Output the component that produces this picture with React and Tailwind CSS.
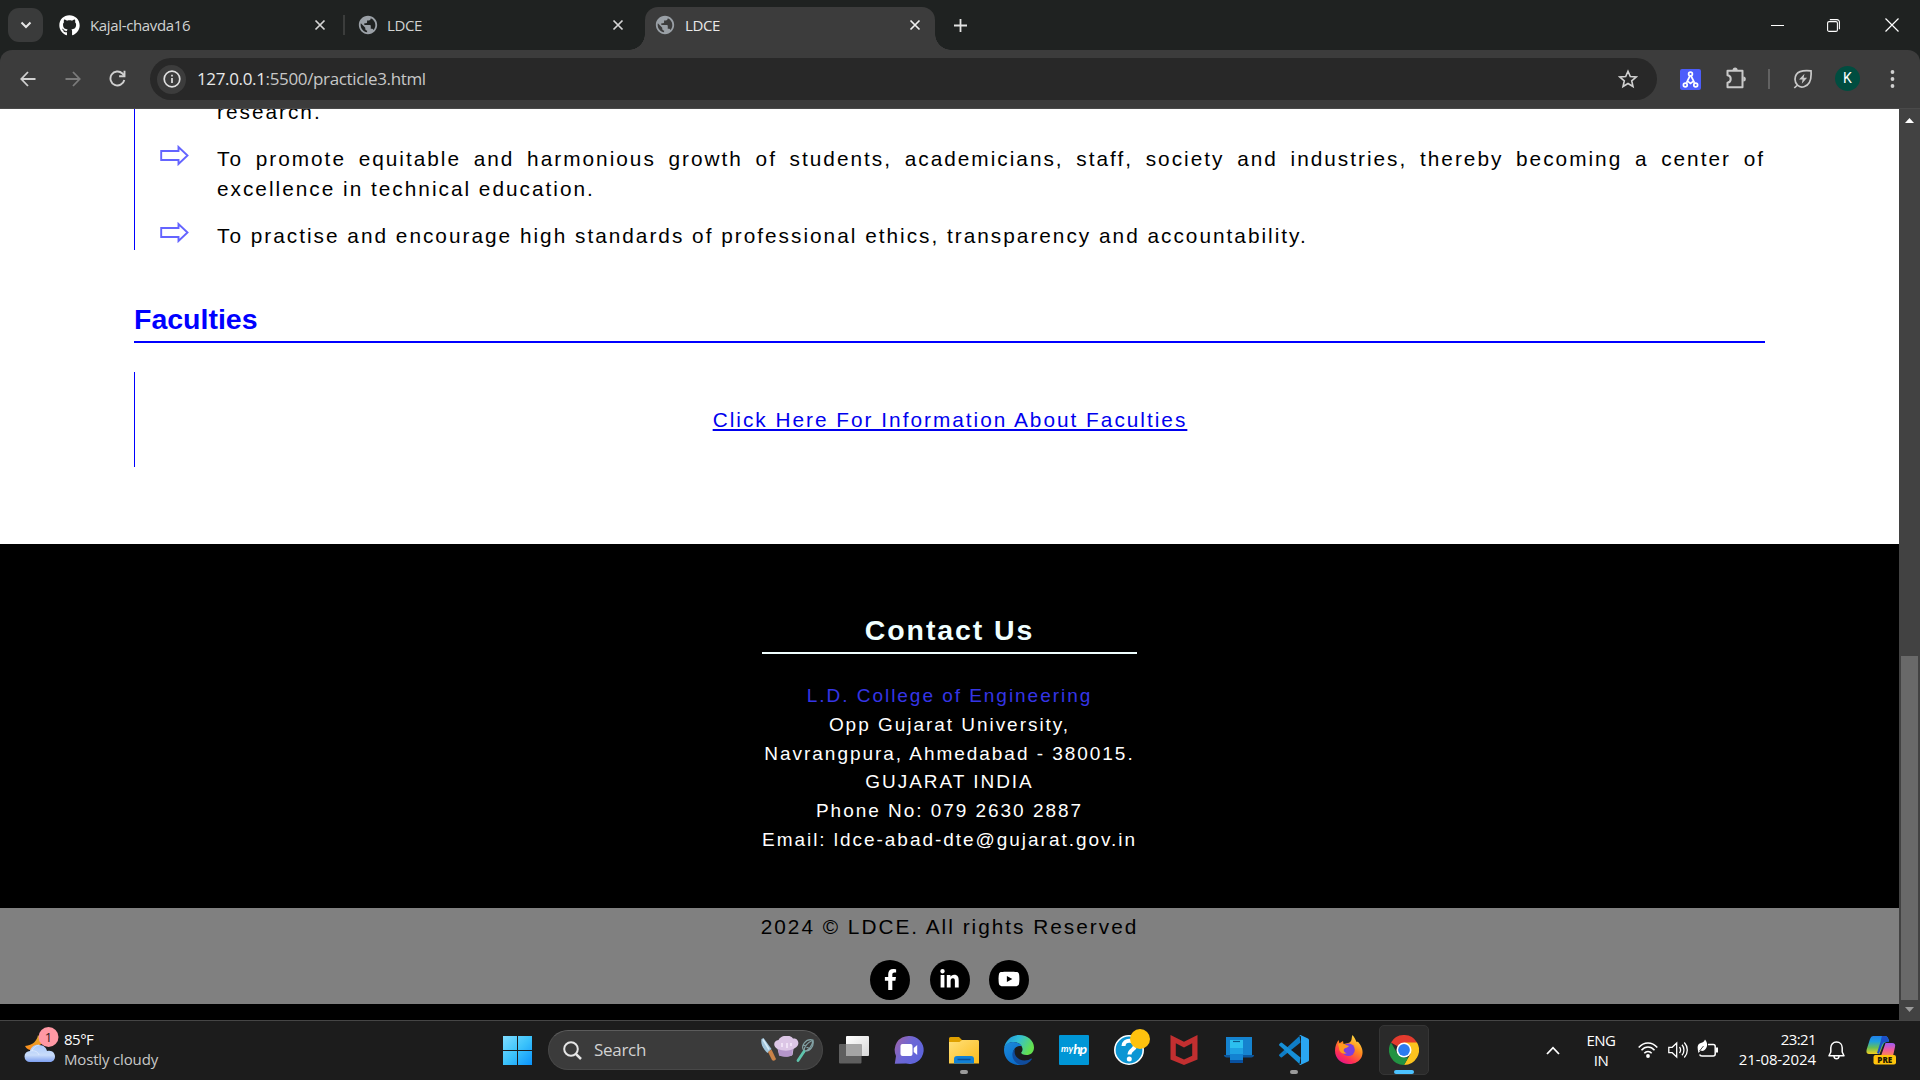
import { FaGithub, FaFacebookF, FaLinkedinIn, FaYoutube } from "react-icons/fa";
import { MdPublic } from "react-icons/md";

function CloseX({ color = "#d5d5d5" }) {
  return (
    <svg width="12" height="12" viewBox="0 0 12 12" stroke={color} strokeWidth="1.7">
      <path d="M1.5 1.5l9 9M10.5 1.5l-9 9" />
    </svg>
  );
}

function TabStrip() {
  return (
    <div className="flex h-[50px] shrink-0 bg-[#1f2221] text-[15px] tracking-[-0.35px] text-[#d0d2d1]">
      <div className="flex w-[645px] items-center">
        <div className="ml-2 flex h-[34px] w-[35px] items-center justify-center rounded-[11px] bg-[#3a3b3b]">
          <svg width="12" height="8" viewBox="0 0 12 8" fill="none" stroke="#e6e6e6" strokeWidth="2">
            <path d="M1.5 1.5L6 6l4.500-4.500" />
          </svg>
        </div>
        <FaGithub className="ml-4 text-white" size={21} />
        <span className="ml-[10px] w-[224px]">Kajal-chavda16</span>
        <CloseX />
        <div className="ml-[17px] h-5 w-[2px] bg-[#3b3d3c]" />
        <MdPublic className="ml-[12px] text-[#9aa0a6]" size={22} />
        <span className="ml-[8px] w-[225px]">LDCE</span>
        <CloseX />
      </div>
      <div className="relative mt-[7px] flex w-[290px] items-center rounded-t-[13px] bg-[#3c3c3c] pb-[7px]">
        <div className="absolute -left-4 bottom-0 size-4 bg-[radial-gradient(circle_at_0_0,#1f2221_15.5px,#3c3c3c_16px)]" />
        <div className="absolute -right-4 bottom-0 size-4 bg-[radial-gradient(circle_at_100%_0,#1f2221_15.5px,#3c3c3c_16px)]" />
        <MdPublic className="ml-[9px] text-[#9aa0a6]" size={22} />
        <span className="ml-[9px] mt-px w-[224px] text-[#e8e8e8]">LDCE</span>
        <CloseX color="#f0f0f0" />
      </div>
      <div className="flex flex-1 items-center text-[#e2e2e2]">
        <svg className="ml-[19px]" width="13" height="13" viewBox="0 0 13 13" stroke="currentColor" strokeWidth="1.8">
          <path d="M6.500 0v13M0 6.500h13" />
        </svg>
        <div className="flex-1" />
        <svg className="mr-[43px]" width="13" height="13" viewBox="0 0 13 13" stroke="#fff">
          <path d="M0 6.500h13" />
        </svg>
        <svg className="mr-[45px]" width="13" height="13" viewBox="0 0 13 13" fill="none" stroke="#fff" strokeWidth="1.100">
          <rect x="0.600" y="2.600" width="9.800" height="9.800" rx="1.500" />
          <path d="M2.800 .6h7.200a2.400 2.400 0 0 1 2.400 2.400v7.200" />
        </svg>
        <svg className="mr-[21px]" width="14" height="14" viewBox="0 0 14 14" stroke="#fff" strokeWidth="1.200">
          <path d="M.5.5l13 13M13.500.5l-13 13" />
        </svg>
      </div>
    </div>
  );
}

function Toolbar() {
  return (
    <div className="h-[59px] shrink-0 bg-[#1f2221]">
      <div className="flex h-full items-center rounded-t-[12px] border-b border-[#4a4a4a] bg-[#3c3c3c]">
        <svg className="ml-[20px] -mt-[1px]" width="16" height="16" viewBox="0 0 16 16" fill="none" stroke="#d0d0d0" strokeWidth="1.800">
          <path d="M15.500 8H1.500M8 1L1.300 8 8 15" />
        </svg>
        <svg className="ml-[29px] -mt-[1px]" width="16" height="16" viewBox="0 0 16 16" fill="none" stroke="#7b7b7b" strokeWidth="1.800">
          <path d="M.5 8h14M8 1l6.700 7L8 15" />
        </svg>
        <svg className="ml-[28px] -mt-[1px]" width="17" height="17" viewBox="0 0 17 17" fill="none" stroke="#d0d0d0" strokeWidth="1.900">
          <path d="M15.300 10A7 7 0 1 1 13.400 3.500L15.500 5.700" />
          <path d="M15.500.8v5.400h-5.400" />
        </svg>
        <div className="ml-[24px] flex h-[42px] w-[1507px] items-center rounded-full bg-[#282828]">
          <div className="ml-[7px] flex size-[29px] items-center justify-center rounded-full bg-[#3c3c3c]">
            <svg width="18" height="18" viewBox="0 0 18 18" fill="none" stroke="#e0e0e0" strokeWidth="1.700">
              <circle cx="9" cy="9" r="7.800" />
              <path d="M9 8v5M9 4.800v1.700" />
            </svg>
          </div>
          <span className="ml-[11px] text-[17px] tracking-[-0.350px] text-[#c7c7c7]">
            <span className="text-[#e8e8e8]">127.0.0.1</span>:5500/practicle3.html
          </span>
          <svg className="ml-auto mr-[19px]" width="20" height="20" viewBox="0 0 20 20" fill="none" stroke="#d0d0d0" strokeWidth="1.600">
            <path d="M10 2.200l2.300 5.300 5.800.5-4.400 3.800 1.300 5.700-5-3-5 3 1.300-5.700L1.900 8l5.800-.5z" />
          </svg>
        </div>
        <svg className="ml-[23px]" width="21" height="21" viewBox="0 0 21 21">
          <rect width="21" height="21" rx="2" fill="#4c5dfb" />
          <g fill="none" stroke="#fff" strokeWidth="1.700">
            <circle cx="10.500" cy="5" r="1.900" />
            <circle cx="5.300" cy="16" r="1.900" />
            <circle cx="15.700" cy="16" r="1.900" />
            <path d="M9.900 7L6.500 13.800M11.100 7l3.400 6.800M7.500 12.200l3 2.300 3-2.300" />
          </g>
        </svg>
        <svg className="ml-[24px] -mt-[2px]" width="22" height="22" viewBox="0 0 22 22">
          <path d="M2.500 3.800h15v16.400h-15v-4.500c4.300-.8 4.300-6.700 0-7.400z" fill="none" stroke="#c9c9c9" strokeWidth="2" strokeLinejoin="round" />
          <path d="M7.600 3a2.500 2.500 0 0 1 5 0zM18.300 9.500a2.500 2.500 0 0 1 0 5z" fill="#c9c9c9" />
        </svg>
        <div className="ml-[21px] h-5 w-[2px] bg-[#626262]" />
        <svg className="ml-[23px] -mt-[1px]" width="20" height="20" viewBox="0 0 20 20" fill="none" stroke="#c9c9c9" strokeWidth="1.700">
          <path d="M18 1.800c-8-.9-15.800.2-16 8.400 0 2.600.9 4.300 2.500 6 1.600 1.500 4 2.300 6.500 1.500C17.500 16 18.600 9 18 1.800zM4.500 16L1.300 19" />
          <path d="M11.500 4.800L6 10.500h3.600l-.8 4.300 5.300-6h-3.500z" fill="#c9c9c9" stroke="none" />
        </svg>
        <div className="ml-[22px] -mt-[1px] flex size-[25px] items-center justify-center rounded-full bg-[#004d40] font-['Roboto'] text-[14px] text-white">K</div>
        <svg className="ml-[30px] -mt-[1px]" width="5" height="18" viewBox="0 0 5 18" fill="#d0d0d0">
          <circle cx="2.500" cy="2" r="1.900" />
          <circle cx="2.500" cy="9" r="1.900" />
          <circle cx="2.500" cy="16" r="1.900" />
        </svg>
      </div>
    </div>
  );
}

function Item({ children }) {
  return (
    <li className="mb-[17px] flex">
      <svg className="ml-[25px] mr-[28px] mt-[1px] shrink-0" width="29" height="21" viewBox="0 0 29 21" fill="none" stroke="#6464ff" strokeWidth="1.900">
        <path d="M1.200 6h17.300V2l9 8.500-9 8.500v-4H1.200z" />
      </svg>
      <p className="flex-1 text-justify">{children}</p>
    </li>
  );
}

function Social({ children }) {
  return <div className="flex size-10 items-center justify-center rounded-full bg-black pb-[2px] text-white">{children}</div>;
}

function Page() {
  return (
    <main className="flex min-h-0 flex-1 flex-col overflow-hidden bg-white font-['Liberation_Sans',sans-serif] text-[20.8px] tracking-[2px] text-black">
      <section className="mx-[134px] -mt-[12px] h-[153px] shrink-0 border-l border-[#0000ff]">
        <ul className="leading-[30px]">
          <li className="mb-[17px] pl-[82px]">research.</li>
          <Item>
            To promote equitable and harmonious growth of students, academicians, staff, society and industries, thereby becoming a center of excellence in technical education.
          </Item>
          <Item>To practise and encourage high standards of professional ethics, transparency and accountability.</Item>
        </ul>
      </section>
      <h2 className="mx-[134px] mt-[50px] h-[43px] shrink-0 border-b-2 border-[#0000ff] text-[28.5px] font-bold leading-[38px] tracking-normal text-[#0000ff]">Faculties</h2>
      <section className="mx-[134px] mt-[29px] flex h-[95px] shrink-0 items-center justify-center border-l border-[#0000ff]">
        <span className="text-[#0000ee] underline">Click Here For Information About Faculties</span>
      </section>
      <footer className="mt-[77px] flex flex-1 flex-col bg-black text-center">
        <div className="mx-auto mt-[66px] w-[375px] shrink-0 text-[#f0ffff]">
          <h2 className="h-[44px] border-b-2 border-[#f0ffff] text-[28.5px] font-bold leading-[40px] tracking-[1.900px]">Contact Us</h2>
          <address className="mt-[28px] whitespace-nowrap text-[19px] not-italic leading-[28.8px] tracking-[1.965px] text-white">
            <div className="text-[#3535e6]">L.D. College of Engineering</div>
            <div>Opp Gujarat University,</div>
            <div>Navrangpura, Ahmedabad - 380015.</div>
            <div>GUJARAT INDIA</div>
            <div>Phone No: 079 2630 2887</div>
            <div>Email: ldce-abad-dte@gujarat.gov.in</div>
          </address>
        </div>
        <div className="mb-4 mt-auto h-[96px] bg-[#808080]">
          <p className="pt-[4px] leading-[30px]">2024 © LDCE. All rights Reserved</p>
          <div className="mt-[18px] flex justify-center gap-[19.500px]">
            <Social><FaFacebookF size={21} /></Social>
            <Social><FaLinkedinIn size={21} /></Social>
            <Social><FaYoutube size={22} /></Social>
          </div>
        </div>
      </footer>
    </main>
  );
}

function Scrollbar() {
  return (
    <div className="flex w-[21px] flex-col items-center bg-[#424242]">
      <svg className="mt-[9px]" width="9" height="5" viewBox="0 0 9 5" fill="#fff"><path d="M4.500 0L9 5H0z" /></svg>
      <div className="mb-[7px] mt-auto h-[344px] w-[17px] bg-[#696969]" />
      <svg className="mb-[8px]" width="9" height="5" viewBox="0 0 9 5" fill="#9a9a9a"><path d="M4.500 5L9 0H0z" /></svg>
    </div>
  );
}

function WeatherIcon() {
  return (
    <svg width="36" height="37" viewBox="0 0 36 37">
      <defs>
        <linearGradient id="moon" x2="0" y2="1"><stop stopColor="#dfae2c" /><stop offset="1" stopColor="#ff8a1c" /></linearGradient>
        <linearGradient id="cloud" x2="0" y2="1"><stop stopColor="#a9c8fb" /><stop offset=".6" stopColor="#c9dcfa" /><stop offset="1" stopColor="#7d9ff0" /></linearGradient>
      </defs>
      <path d="M14 8c-1 6-5 10-13 11 2 4 6 5 10 4l8-8z" fill="url(#moon)" />
      <path d="M6 35a5.500 5.500 0 0 1 0-11c1-4 5-7 9.500-6 4 0 7 3 7.500 6 5-1.500 8 2 8 5.500 0 3-2 5.500-5 5.500z" fill="url(#cloud)" />
      <path d="M6 24c5-1 8 1 9 4M15 18c-4 1-6 3-7 6" stroke="#e8f1ff" strokeWidth="1" fill="none" opacity=".6" />
      <circle cx="24.500" cy="10" r="10" fill="#ff98a4" />
      <text x="24.500" y="14.800" textAnchor="middle" fontSize="13" fill="#2a1a1a" fontFamily="Open Sans">1</text>
    </svg>
  );
}

function SearchArt() {
  return (
    <svg width="54" height="28" viewBox="0 0 54 28">
      <path d="M1.500 3l2-1 8 11-4 4C3 13 .5 8 1.500 3z" fill="#a3c6dc" />
      <path d="M3 3.500l6 10" stroke="#d8ecf7" strokeWidth="1.500" />
      <path d="M8 16l3.500-2.500 4.500 9.500c-1 2-3 2-4 1z" fill="#c98248" />
      <path d="M17.500 13c-5-2.500-4-8.500 1-9C21-1.500 31-1.500 33 2.500c5.500-1 7 6 3.500 8.500l-3 2-1 6c-4 2.500-10 1-13 .5z" fill="#dcc6e6" />
      <path d="M18 13l1 6.500c4 1.500 9 2 13 0l1-6.500c-5 2.500-10 2-15 0z" fill="#b596ca" />
      <path d="M22 11v-4M27 12V7M31 10V7" stroke="#f6ecfb" strokeWidth="1.500" />
      <g fill="none" stroke="#83a3a6" strokeWidth="1.100">
        <path d="M44 15c-4-5 2-13 9-11 1.500 6-3 12-9 11zM44 15c0-5 5-9 9-11M44 15c4 0 8-4 9-11M43.500 9l6.500 4" />
      </g>
      <path d="M44 15.500l-6 9" stroke="#5fc4ad" strokeWidth="2.800" strokeLinecap="round" />
    </svg>
  );
}

const icons = {
  view: (
    <svg width="30" height="30" viewBox="0 0 30 30">
      <defs><linearGradient id="tv" x2="1" y2="1"><stop stopColor="#fff" /><stop offset="1" stopColor="#d8d8d8" /></linearGradient></defs>
      <rect x="7" y="1" width="23" height="20" rx="1" fill="url(#tv)" />
      <rect x="0" y="9" width="22.500" height="19.500" rx="1" fill="#5f5f5f" />
      <rect x="7" y="9" width="15.500" height="12" fill="#a5a5a5" />
    </svg>
  ),
  chat: (
    <svg width="30" height="30" viewBox="0 0 30 30">
      <defs><linearGradient id="ch" x1="0" y1=".2" x2="1" y2=".8"><stop stopColor="#9a63ac" /><stop offset=".45" stopColor="#6c67d6" /><stop offset="1" stopColor="#5a63dc" /></linearGradient></defs>
      <path d="M15 1a14 14 0 1 1-3 27.500L.8 28.800 2 21A14 14 0 0 1 15 1z" fill="url(#ch)" />
      <rect x="6.500" y="9" width="12" height="12" rx="2" fill="#fff" />
      <path d="M19.700 13l3.500-3v10l-3.500-3z" fill="#fff" />
    </svg>
  ),
  folder: (
    <svg width="30" height="30" viewBox="0 0 30 30">
      <defs><linearGradient id="fo" x2="1" y2="1"><stop stopColor="#ffe07a" /><stop offset="1" stopColor="#fbbc1c" /></linearGradient></defs>
      <path d="M0 3.500Q0 2 1.500 2H10l3 3h15q2 0 2 2v7H0z" fill="#dfa000" />
      <path d="M0 7h10.500L13 5h15.500Q30 5 30 6.500v22H0z" fill="url(#fo)" />
      <path d="M5 28.500V24q0-3 3-3h14q3 0 3 3v4.500z" fill="#1181d6" />
      <path d="M8.500 24.500h13" stroke="#0a4f96" strokeWidth="1.500" />
    </svg>
  ),
  edge: (
    <svg width="30" height="30" viewBox="0 0 30 30">
      <defs>
        <linearGradient id="e1" x1="0" y1="0" x2="1" y2=".4"><stop stopColor="#1a8fe0" /><stop offset=".5" stopColor="#33bfd4" /><stop offset="1" stopColor="#63e04f" /></linearGradient>
        <linearGradient id="e2" x1="0" y1="0" x2=".6" y2="1"><stop stopColor="#1b8bdc" /><stop offset="1" stopColor="#0a6bc8" /></linearGradient>
      </defs>
      <path d="M0 14C1 5 8 0 15 0c9 0 15 6 15 12.500 0 5-3.500 7.500-7.500 7.500-3.500 0-5.300-1.200-5.300-2.200 0-.8 1.600-1.500 1.300-4C18 10 14 7 9.500 7 5 7 1 10 0 14z" fill="url(#e1)" />
      <path d="M0 15c0-5 4-8 9-8 4 0 7.500 2 8.700 4-7-.5-9.700 5-7.700 10 1.500 4.500 5 7.500 9 8.500C9 32 0 25 0 15z" fill="url(#e2)" />
      <path d="M11 14c-2 7 4 11.500 9.500 11.500 3 0 5-1 6.500-2 .8-.3 1.200.3.800.8-2 3-5.500 5.700-10 5.700C9 29 5.500 18 11 14z" fill="#104c9c" />
    </svg>
  ),
  hp: (
    <div className="flex size-[30px] items-center justify-center rounded-[1px] bg-[#0096d6] pb-[2px] font-['Lato'] text-[9.500px] font-bold italic leading-none text-white">
      my<span className="text-[14px] tracking-[-1.200px]">hp</span>
    </div>
  ),
  help: (
    <div className="relative">
      <svg width="30" height="30" viewBox="0 0 30 30">
        <circle cx="15" cy="15" r="14.200" fill="#0c96d4" stroke="#fff" strokeWidth="1.600" />
        <path d="M9.500 11c0-7 11.500-7 11.500-.5 0 4.500-5.500 4-5.500 9" fill="none" stroke="#fff" strokeWidth="4" />
        <circle cx="15.300" cy="24" r="2.500" fill="#fff" />
      </svg>
      <div className="absolute -top-[6px] left-[16px] size-5 rounded-full bg-[#ffc20e]" />
    </div>
  ),
  mcafee: (
    <svg width="30" height="30" viewBox="0 0 30 30">
      <path d="M1.500 0L15 6.800 28.500 0v24.500L15 30 1.500 24.500z" fill="#c22f30" />
      <path d="M6.800 8.200L15 12.500l8.200-4.300v12.600L15 24.500l-8.200-3.700z" fill="#1c1c1c" />
    </svg>
  ),
  phone: (
    <svg width="30" height="30" viewBox="0 0 30 30">
      <path d="M2 2h26v18H2z" fill="#1583cf" />
      <path d="M0 20h30v.8q-.8 1.700-2.500 1.700h-25Q.8 22.500 0 20.800z" fill="#0c569c" />
      <rect x="6" y="5" width="13" height="23" fill="#2cc0ef" />
      <path d="M6 13h13v7H6z" fill="#1ea2e3" /><path d="M6 19h13v6H6z" fill="#1382d1" /><path d="M6 25h13v3H6z" fill="#08509f" />
      <path d="M9 6.500h7" stroke="#0b5a8c" strokeWidth="1.200" />
    </svg>
  ),
  code: (
    <svg width="30" height="30" viewBox="0 0 30 30">
      <path d="M21.500 7.500L3 22.300q-.7.500-1.300 0L.4 21q-.7-.8 0-1.500L20.500 1z" fill="#0f7dc6" />
      <path d="M21.500 22.500L3 7.700q-.7-.5-1.300 0L.4 9q-.7.800 0 1.500L20.500 29z" fill="#1690d8" />
      <path d="M20.200.6q.8-.8 1.800-.4l7 3.300q1 .5 1 1.500v20q0 1-1 1.500l-7 3.300q-1 .4-1.800-.4l1.800-1V1.600z" fill="#2aa6f2" />
    </svg>
  ),
  firefox: (
    <svg width="30" height="30" viewBox="0 0 30 30">
      <defs><linearGradient id="ff" x1=".9" y1="0" x2=".3" y2="1"><stop stopColor="#fff04a" /><stop offset=".45" stopColor="#ff8a1e" /><stop offset=".8" stopColor="#ff2f55" /><stop offset="1" stopColor="#e3158a" /></linearGradient></defs>
      <path d="M18.500 0c2 2.500 3 4.500 4 7 .8-.3 1.500-.2 2.500 1 3 4 4.500 8.500 3 13-2 5.500-7 8-13 8C7 29 1 23.500 1 15.500 1 11 2.500 8 4.500 5l1 3.200L9 6l.5 3C13 8 16 8 17 6s.5-4 1.500-6z" fill="url(#ff)" />
      <circle cx="14.500" cy="14.800" r="6.300" fill="#7b3fe0" />
      <path d="M4 9c4-1 6 0 8 1l3 1c-1 2-4 1.500-5 3-1 2 1 4 3 4-4 2-8-1-8-5z" fill="#ff9a1f" />
    </svg>
  ),
  chrome: (
    <svg width="30" height="30" viewBox="0 0 30 30">
      <path d="M15 15L2 7.500A15 15 0 0 1 28 7.500z" fill="#e33b2e" />
      <path d="M15 7.500h13A15 15 0 0 1 15 30l6.500-11.300z" fill="#fcc31e" />
      <path d="M2 7.500l6.500 11.300L15 22.500h4.300L15 30A15 15 0 0 1 2 7.500z" fill="#229342" />
      <circle cx="15" cy="15" r="7.500" fill="#fff" />
      <circle cx="15" cy="15" r="5.900" fill="#2c7bf0" />
    </svg>
  ),
};

const apps = ["view", "chat", "folder", "edge", "hp", "help", "mcafee", "phone", "code", "firefox", "chrome"];

function AppCell({ name }) {
  const active = name === "chrome";
  const running = name === "folder" || name === "code";
  return (
    <div className="flex w-[55px] justify-center">
      <div className={active ? "flex h-[50px] w-[50px] flex-col items-center rounded-[5px] border border-[#353535] bg-[#2a2a2a] pt-[9px]" : "flex h-[50px] w-[50px] flex-col items-center pt-[10px]"}>
        {icons[name]}
        {running && <div className="mt-[5px] h-[4px] w-[8px] rounded-full bg-[#9a9a9a]" />}
        {active && <div className="mt-[5px] h-[4px] w-[20px] shrink-0 rounded-full bg-[#4cc2ff]" />}
      </div>
    </div>
  );
}

function Taskbar() {
  return (
    <div className="flex h-[60px] shrink-0 items-center border-t border-[#454545] bg-[#1c1c1c] pb-px text-[15px] leading-[20px] text-white">
      <div className="flex w-[503px] items-center pl-[24px]">
        <div className="-mt-[9px]"><WeatherIcon /></div>
        <div className="-mt-[2px] ml-[4px]">
          <div className="tracking-[-0.500px]">85°F</div>
          <div className="tracking-[-0.160px] text-[#c8c8c8]">Mostly cloudy</div>
        </div>
      </div>
      <svg width="29" height="29" viewBox="0 0 29 29">
        <defs><linearGradient id="win" gradientUnits="userSpaceOnUse" x2="29" y2="29"><stop stopColor="#7fdcff" /><stop offset=".5" stopColor="#3cc3fb" /><stop offset="1" stopColor="#0a93fb" /></linearGradient></defs>
        <path d="M0 0h14v14H0zM15 0h14v14H15zM0 15h14v14H0zM15 15h14v14H15z" fill="url(#win)" />
      </svg>
      <div className="ml-[16px] flex h-[40px] w-[275px] items-center rounded-full border border-[#484848] border-t-[#5c5c5c] bg-[#3b3b3b]">
        <svg className="ml-[14px]" width="19" height="19" viewBox="0 0 19 19" fill="none" stroke="#e6e6e6" strokeWidth="2">
          <circle cx="8" cy="8" r="6.800" /><path d="M12.800 12.800L18 18" strokeWidth="2.500" />
        </svg>
        <span className="ml-[12px] text-[17px] tracking-[-0.300px] text-[#d2d2d2]">Search</span>
        <div className="ml-auto mr-[8px]"><SearchArt /></div>
      </div>
      <div className="ml-[3px] flex">
        {apps.map((a) => <AppCell key={a} name={a} />)}
      </div>
      <svg className="ml-auto" width="14" height="9" viewBox="0 0 14 9" fill="none" stroke="#fff" strokeWidth="1.800"><path d="M1 8l6-6.300L13 8" /></svg>
      <div className="-mt-px ml-[26px] w-[30px] text-center tracking-[-0.500px]">ENG<br />IN</div>
      <svg className="ml-[22px]" width="20" height="16" viewBox="0 0 20 16" fill="none" stroke="#fff" strokeWidth="1.500">
        <path d="M.7 5.500c5.300-6 13.300-6 18.600 0M3.500 8.300c3.700-4.300 9.300-4.300 13 0M6.300 11.300c2-2.400 5.400-2.400 7.400 0" />
        <circle cx="10" cy="14" r="1.900" fill="#fff" stroke="none" />
      </svg>
      <svg className="ml-[10px]" width="20" height="18" viewBox="0 0 20 18" fill="none" stroke="#fff" strokeWidth="1.300">
        <path d="M.8 6.300h3.400L8.700 2v14l-4.500-4.300H.8zM11.500 6c1.300 1.800 1.300 4.200 0 6M14 3.800c2.600 3 2.600 7.400 0 10.400M16.300 1.500c4 4.300 4 10.700 0 15" />
      </svg>
      <svg className="ml-[9px] -mt-[2px]" width="22" height="20" viewBox="0 0 22 20">
        <path d="M11 5.500h5.200q2 0 2 2v7.500q0 2-2 2H5q-2 0-2.300-1.500" fill="none" stroke="#fff" strokeWidth="1.500" />
        <path d="M19 8.500h2v5h-2z" fill="#fff" />
        <path d="M8 .5c3 3.500 3 8-1 11-1 .5-2.500.5-3.500 0l-2 2.500C.3 9-.5 5 4.500 3.800 6.500 3 7.500 2 8 .5z" fill="#fff" />
        <path d="M2.500 12L6.500 7" stroke="#1c1c1c" strokeWidth=".8" />
      </svg>
      <div className="-mt-[2px] ml-[15px] w-[82px] text-right">
        <div className="tracking-[-0.600px]">23:21</div>
        <div className="tracking-[-0.100px]">21-08-2024</div>
      </div>
      <svg className="ml-[12px]" width="17" height="19" viewBox="0 0 17 19" fill="none" stroke="#fff" strokeWidth="1.500" strokeLinejoin="round">
        <path d="M8.500 1C5 1 2.800 3.500 2.800 6.800v4.200L1 14.800h15L14.200 11V6.800C14.200 3.500 12 1 8.500 1zM6 15.500c.3 3 4.700 3 5 0" />
      </svg>
      <svg className="ml-[21px] mr-[23px] shrink-0" width="31" height="30" viewBox="0 0 31 30">
        <defs>
          <linearGradient id="c1" x2="0" y2="1"><stop stopColor="#2280e8" /><stop offset=".3" stopColor="#1d9fe0" /><stop offset=".65" stopColor="#68bf55" /><stop offset="1" stopColor="#f5cf1e" /></linearGradient>
          <linearGradient id="c2" x2="0" y2="1"><stop stopColor="#9d5cf5" /><stop offset=".5" stopColor="#ee5aa0" /><stop offset="1" stopColor="#ff8a4a" /></linearGradient>
        </defs>
        <path d="M7 1h12q3 0 4 5l-5 2-4.500 11H3Q-.5 19 .8 14L4 4Q5 1 7 1z" fill="url(#c1)" />
        <path d="M16 1h3q3 0 4 6h-4q-2 0-3 3l-3 9-2-1 3.500-11Q15.500 2 16 1z" fill="#1b4fc8" />
        <path d="M19.500 8H26q4 0 3 4l-2 9H15z" fill="url(#c2)" />
        <rect x="7.500" y="20" width="22.500" height="9.500" rx="2" fill="#ffc40c" />
        <text x="18.800" y="27.700" fontSize="8" fontWeight="800" fontFamily="Open Sans" textAnchor="middle" fill="#1c1600">PRE</text>
      </svg>
    </div>
  );
}

export default function App() {
  return (
    <div className="flex h-[1080px] w-[1920px] flex-col overflow-hidden bg-black font-['Open_Sans',sans-serif]">
      <TabStrip />
      <Toolbar />
      <div className="flex min-h-0 flex-1">
        <Page />
        <Scrollbar />
      </div>
      <Taskbar />
    </div>
  );
}
